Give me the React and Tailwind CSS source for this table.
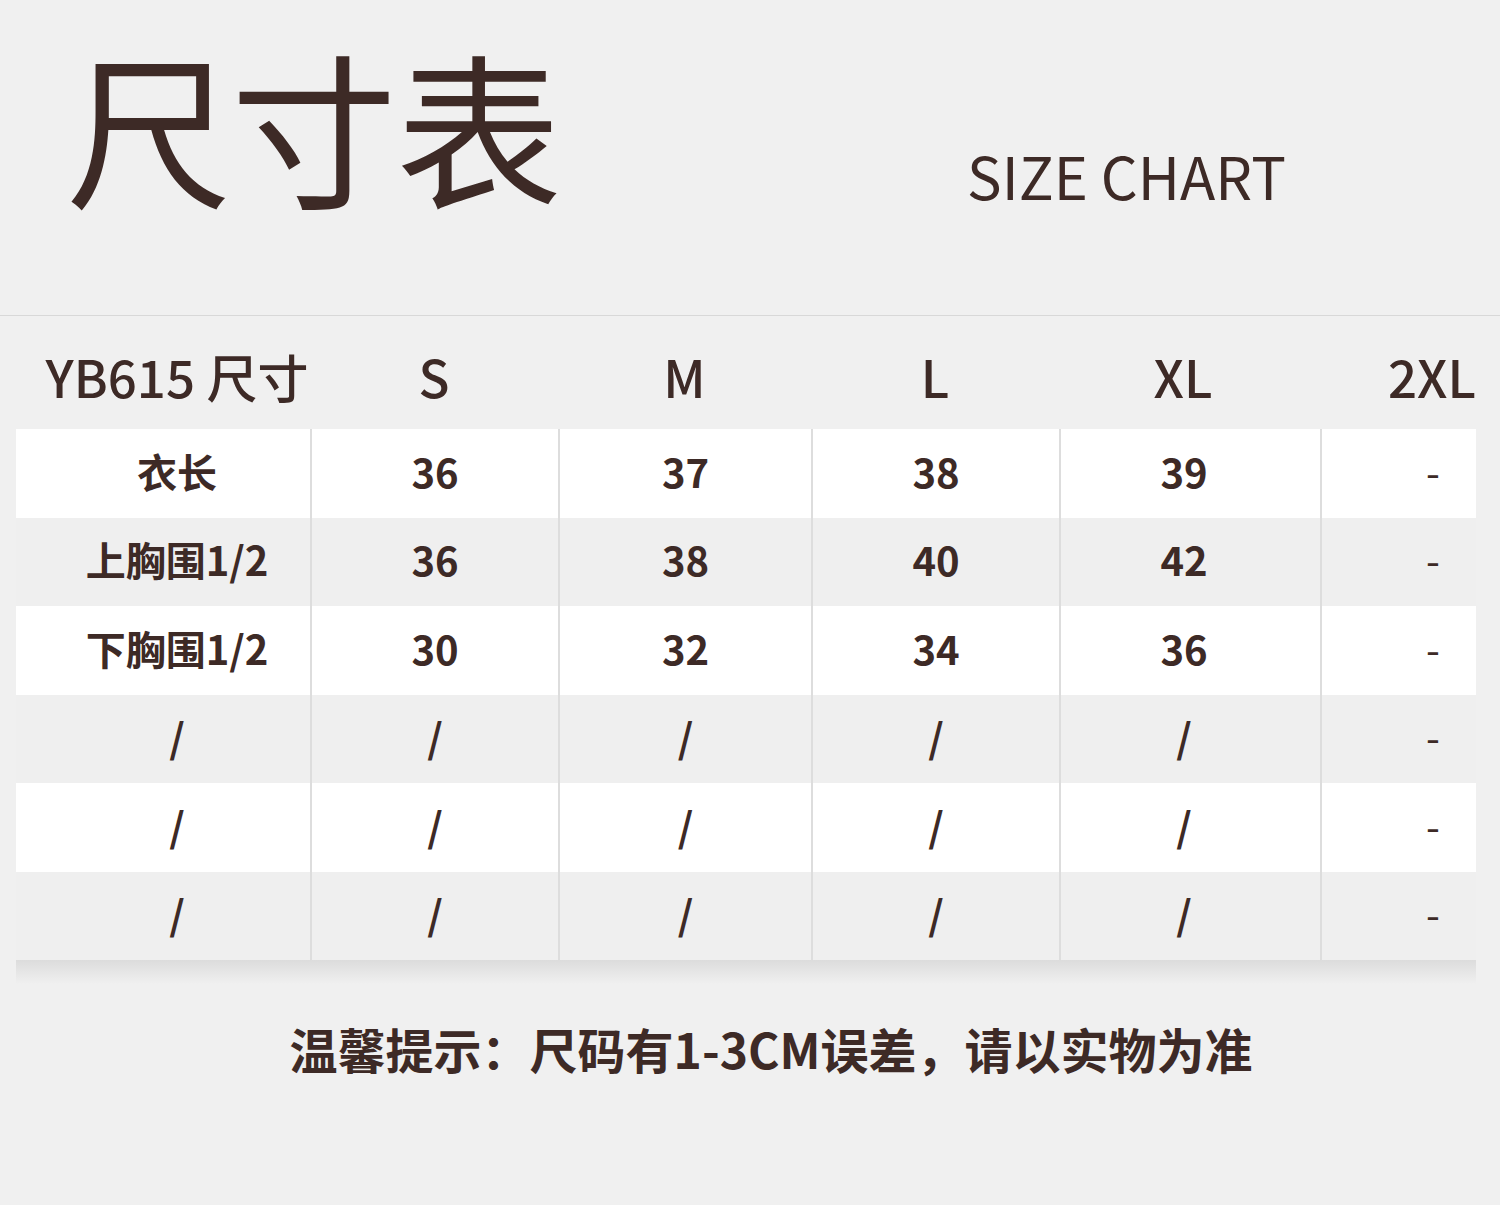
import React from "react";

const font = { fontFamily: '"Noto Sans CJK SC", "Noto Sans", sans-serif' };

const sizes = ["S", "M", "L", "XL", "2XL"];

const rows = [
  { label: "衣长", values: ["36", "37", "38", "39", "-"] },
  { label: "上胸围1/2", values: ["36", "38", "40", "42", "-"] },
  { label: "下胸围1/2", values: ["30", "32", "34", "36", "-"] },
  { label: "/", values: ["/", "/", "/", "/", "-"] },
  { label: "/", values: ["/", "/", "/", "/", "-"] },
  { label: "/", values: ["/", "/", "/", "/", "-"] },
];

// per-column padding so text centres match the chart
const colPad = ["pl-[28px]", "", "", "", "pr-[13px]", "pl-[68px]"];

const App = () => {
  return (
    <div
      className="w-[1500px] h-[1205px] bg-[#f0f0f0] text-[#3d2a26] overflow-hidden"
      style={font}
    >
      {/* Title */}
      <div className="h-[316px] flex items-start border-b border-[#d8d8d8]">
        <div className="pl-[66px] pt-[24px] text-[166px] leading-[1.2] tracking-[-1px]">
          尺寸表
        </div>
        <div className="ml-auto mr-[214px] mt-[146px] text-[58px] leading-none">
          SIZE CHART
        </div>
      </div>

      {/* Header row */}
      <div className="ml-[16px] w-[1460px] h-[113px] grid grid-cols-[294px_248px_253px_248px_261px_156px] items-center pt-[8px] text-[51px] leading-none font-medium whitespace-nowrap">
        <div className={`text-center ${colPad[0]}`}>YB615 尺寸</div>
        {sizes.map((s, i) => (
          <div key={s} className={`text-center ${colPad[i + 1]}`}>
            {s}
          </div>
        ))}
      </div>

      {/* Table */}
      <div className="ml-[16px] w-[1460px]">
        {rows.map((row, r) => (
          <div
            key={r}
            className={`h-[88.5px] grid grid-cols-[294px_248px_253px_248px_261px_156px] font-bold text-[40px] ${
              r % 2 === 0 ? "bg-white" : "bg-[#efefef]"
            }`}
          >
            <div className={`flex items-center justify-center pb-[5px] ${colPad[0]}`}>{row.label}</div>
            {row.values.map((v, i) => (
              <div
                key={i}
                className={`flex items-center justify-center pb-[5px] border-l-2 border-[#dddddd] ${colPad[i + 1]} ${
                  v === "-" ? "font-normal" : ""
                }`}
              >
                {v}
              </div>
            ))}
          </div>
        ))}
        <div className="h-[24px] bg-gradient-to-b from-[#dcdcdc] to-[#f0f0f0]" />
      </div>

      {/* Note */}
      <div className="mt-[40px] pl-[42px] text-center text-[48px] font-bold leading-none">
        温馨提示：尺码有1-3CM误差，请以实物为准
      </div>
    </div>
  );
};

export default App;
